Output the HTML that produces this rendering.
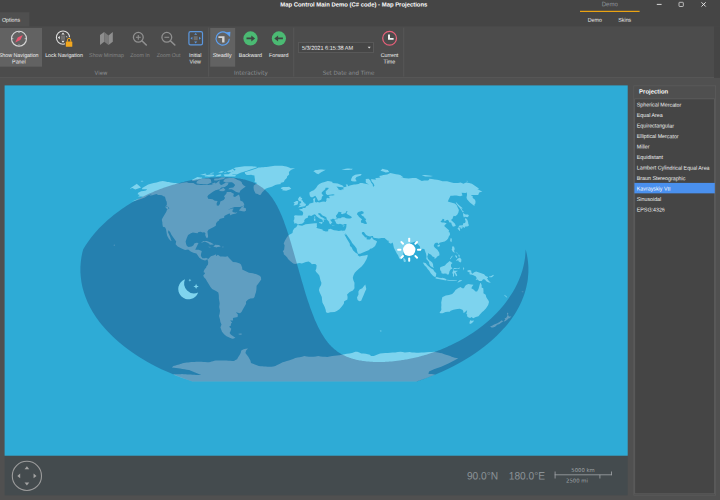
<!DOCTYPE html>
<html><head><meta charset="utf-8"><title>Map Control Main Demo (C# code) - Map Projections</title>
<style>
html,body{margin:0;padding:0}
body{width:720px;height:500px;background:#505050;position:relative;overflow:hidden;font-family:"Liberation Sans",sans-serif;font-size:5.3px;color:#efefef}
div{position:absolute;box-sizing:border-box}
.t{left:0;top:0;white-space:nowrap}
</style></head><body>
<svg width="720" height="500" viewBox="0 0 720 500" style="position:absolute;left:0;top:0"><rect x="0.00" y="0.00" width="720.00" height="26.60" fill="#454545"/><rect x="0.00" y="12.20" width="29.40" height="14.60" fill="#4f4f4f"/><rect x="0.00" y="26.60" width="714.00" height="50.60" fill="#4c4c4c"/><rect x="0.00" y="77.10" width="714.00" height="0.80" fill="#585858"/><rect x="714.00" y="26.60" width="6.00" height="51.30" fill="#454545"/><rect x="0.00" y="28.00" width="42.00" height="38.70" fill="#626262"/><rect x="210.20" y="28.00" width="25.00" height="38.70" fill="#626262"/><rect x="208.30" y="27.60" width="0.80" height="49.00" fill="#5a5a5a"/><rect x="293.40" y="27.60" width="0.80" height="49.00" fill="#5a5a5a"/><rect x="403.40" y="27.60" width="0.80" height="49.00" fill="#5a5a5a"/><rect x="298.10" y="42.10" width="75.70" height="10.80" fill="#5e5e5e"/><rect x="298.90" y="42.90" width="74.10" height="9.20" fill="#464646"/><rect x="580.00" y="10.80" width="59.60" height="1.20" fill="#eba312"/><rect x="4.60" y="455.60" width="623.10" height="39.70" fill="#444b4e"/><rect x="633.40" y="85.50" width="82.60" height="410.00" fill="#5c5c5c"/><rect x="634.10" y="86.20" width="81.20" height="408.60" fill="#4f4f4f"/><rect x="634.40" y="98.50" width="80.40" height="395.60" fill="#606060"/><rect x="635.10" y="99.20" width="79.00" height="394.20" fill="#454545"/><rect x="634.40" y="182.90" width="80.40" height="10.45" fill="#4a90ee"/><g><rect x="4.6" y="85.4" width="623.1" height="370.3" fill="#2eabd6"/>
<path d="M142.2 188.0L148.2 184.6L153.6 183.1L156.6 182.4L159.7 181.6L162.7 180.9L164.2 181.2L165.7 181.5L167.3 181.9L168.9 182.1L170.6 182.4L172.4 182.7L174.1 183.0L175.8 183.1L177.5 183.2L179.2 183.4L181.8 183.0L184.4 182.6L186.9 182.2L188.7 183.1L191.1 183.1L193.4 183.1L194.9 183.9L196.4 184.7L198.5 184.8L200.6 184.9L202.8 185.0L204.6 185.0L206.5 185.0L208.4 185.0L210.6 184.7L212.7 184.4L215.5 183.7L219.8 180.2L219.3 183.1L220.2 184.4L221.6 185.0L225.6 182.7L228.5 183.1L227.7 185.0L224.9 187.1L221.3 187.5L219.5 189.3L215.5 190.2L212.9 191.8L208.4 194.9L207.4 196.6L208.1 198.7L210.3 199.0L212.5 199.3L214.8 200.8L217.6 201.0L216.6 203.6L216.8 205.5L218.4 205.8L219.9 203.9L220.3 201.5L223.7 199.9L225.1 198.0L224.0 196.2L226.3 193.7L226.8 191.9L228.7 192.0L230.7 192.1L232.3 192.9L233.9 193.7L233.2 196.2L234.9 197.0L237.7 195.2L239.0 194.6L240.1 198.0L240.2 200.5L242.9 201.8L244.3 204.3L243.9 205.5L240.1 207.1L237.4 207.1L234.7 207.1L231.0 208.2L227.6 210.1L232.0 208.5L233.8 208.7L232.6 210.1L232.5 212.1L235.7 212.7L237.5 212.1L236.0 213.4L232.4 214.3L229.8 215.5L230.3 213.8L229.2 213.6L226.6 214.8L224.6 215.7L223.9 217.3L224.6 217.7L222.1 218.3L219.6 219.1L219.0 220.4L217.1 221.7L216.0 223.6L215.8 225.7L213.3 227.3L211.3 228.2L208.5 229.8L207.4 231.6L207.9 234.8L208.1 236.6L207.3 238.2L206.2 237.4L205.2 235.0L205.5 233.3L204.3 232.3L202.4 232.6L200.9 231.8L198.5 231.9L197.5 233.3L195.8 233.0L192.9 232.5L190.9 233.3L188.1 235.0L186.8 237.9L185.6 241.6L186.1 244.1L186.9 246.0L188.6 247.0L191.8 246.5L193.5 245.3L194.3 243.5L196.6 242.8L198.5 243.0L197.4 245.3L196.3 247.4L195.2 249.8L198.6 249.8L201.8 250.9L201.0 254.0L200.9 256.0L202.4 258.3L205.2 258.2L205.9 257.7L208.3 258.9L208.5 259.8L207.0 259.4L205.1 260.5L203.3 260.0L201.4 259.3L199.1 257.4L198.2 255.9L196.4 253.4L193.4 252.7L190.7 251.4L188.2 249.4L185.1 249.9L181.6 248.4L177.7 246.6L175.6 244.3L176.2 241.6L174.4 239.1L172.6 236.6L171.4 234.8L170.1 232.0L168.5 230.2L168.0 232.3L169.2 234.8L170.3 237.2L170.9 239.5L171.6 240.7L170.9 241.1L169.0 238.9L167.2 235.8L166.8 234.1L166.4 231.6L166.0 229.2L165.0 227.3L162.9 226.7L162.4 224.1L162.4 222.6L161.9 220.4L161.9 219.3L163.0 217.3L164.8 214.2L166.2 212.1L167.1 209.4L169.4 208.6L168.3 207.0L166.2 206.1L166.9 204.3L166.7 201.8L166.0 200.5L165.5 198.7L165.0 196.8L163.5 196.2L161.9 195.2L160.0 195.1L158.1 194.9L156.5 193.9L152.2 195.2L149.3 195.8L152.3 193.7L147.8 195.6L144.9 197.4L140.8 198.9L136.2 200.4L132.0 201.4L135.6 199.9L140.6 198.0L143.0 196.6L140.7 196.4L138.0 196.6L139.8 194.9L137.6 194.2L138.2 192.8L141.1 191.2L143.5 190.9L145.8 190.6L147.3 189.3L145.4 189.3L142.1 189.2ZM165.1 206.4L167.9 207.1L168.5 209.2L167.1 209.1L166.0 208.0ZM238.9 210.4L241.9 206.8L244.4 205.4L243.5 207.4L245.8 208.2L246.1 210.5L244.4 211.4L242.4 211.2ZM239.4 192.7L236.2 192.1L234.0 190.6L231.7 189.3L228.3 189.3L229.5 188.1L233.3 187.5L235.2 185.0L233.2 183.1L231.9 182.2L230.0 182.3L228.1 182.4L226.2 182.5L224.6 181.9L223.1 181.2L225.1 178.8L227.5 178.3L229.8 177.9L231.8 177.9L233.8 177.9L235.9 179.1L237.6 179.9L239.4 180.6L241.6 182.1L242.1 183.7L243.8 185.6L245.7 186.6L242.7 188.7L240.4 190.6ZM197.8 180.6L202.5 178.4L204.7 178.4L206.8 178.5L209.0 178.5L210.8 179.4L211.1 180.9L211.5 182.5L207.1 184.4L205.3 184.3L203.5 184.2L201.7 184.1L200.0 183.9L198.4 183.7L196.7 183.5L196.5 181.9ZM191.8 180.0L197.4 177.1L199.0 177.3L200.6 177.4L202.2 177.5L201.7 178.8L198.8 179.7L196.0 180.6L192.6 180.9ZM228.6 174.4L230.2 174.4L231.9 174.5L233.5 174.5L235.2 174.6L236.8 174.6L241.1 172.5L243.2 171.9L245.4 171.3L247.9 170.5L250.5 169.6L252.9 168.8L255.2 167.9L257.5 166.9L256.1 166.7L254.8 166.6L253.4 166.4L252.1 166.2L250.6 166.2L249.1 166.2L247.5 166.3L246.0 166.3L244.5 166.3L242.7 166.6L241.0 166.8L239.2 167.1L237.4 167.3L235.6 167.6L232.7 168.8L233.6 169.7L234.7 170.7L230.4 172.5ZM224.8 176.6L226.5 176.6L228.3 176.6L230.0 176.6L231.7 176.6L233.5 176.6L235.2 176.6L236.2 175.4L234.7 175.1L233.2 174.9L231.7 174.6L230.3 174.4L228.8 174.2L227.1 174.2L225.3 174.3L223.5 174.4L224.1 175.5ZM218.7 180.0L221.4 179.5L224.0 179.0L225.3 177.5L223.4 177.4L221.5 177.4L218.4 178.4L216.2 178.6L214.1 178.8L214.3 180.4L217.0 180.4ZM204.3 175.6L207.2 175.0L210.1 174.4L211.5 174.6L213.0 174.8L214.4 175.0L213.5 176.3L211.3 176.5L209.1 176.8L207.1 176.6L205.0 176.5ZM226.8 171.3L230.3 169.9L233.7 168.6L234.7 169.1L235.7 169.7L232.6 171.9L230.4 172.1L228.2 172.3ZM219.1 190.0L223.5 187.7L225.5 190.0L223.2 191.2L219.9 191.0ZM244.7 172.2L247.1 171.5L249.6 170.7L252.0 170.0L254.2 169.2L256.4 168.4L258.5 167.6L260.1 167.4L261.8 167.3L263.4 167.2L265.0 167.1L266.6 166.9L268.2 166.7L269.8 166.5L271.5 166.3L273.1 166.0L274.7 165.8L276.2 165.8L277.7 165.8L279.2 165.7L280.7 165.7L282.2 165.7L283.5 166.0L284.9 166.3L286.3 166.6L287.8 166.9L289.1 167.6L290.5 168.2L292.0 168.2L293.6 168.2L295.1 168.2L293.0 169.1L290.9 170.0L288.9 171.9L289.2 174.4L287.2 176.3L286.8 178.1L284.7 180.0L283.8 181.9L280.3 183.1L281.1 184.0L279.2 184.3L277.2 184.6L275.3 184.9L271.9 186.8L268.2 187.8L265.6 188.7L264.0 190.6L262.0 192.4L260.8 194.7L259.1 195.1L257.9 194.1L255.6 193.4L254.7 191.8L253.9 190.0L253.5 187.5L253.8 185.6L257.2 183.1L254.5 182.1L255.0 180.0L254.6 177.5L254.4 175.6L252.7 175.2L251.1 174.8L248.9 174.9L246.7 175.0L245.1 173.8ZM280.7 188.1L282.9 187.0L285.0 187.0L287.2 187.1L289.1 186.8L291.3 188.7L289.7 189.6L286.2 190.7L284.1 190.5L282.1 190.2L282.9 189.3L281.1 188.8ZM208.3 258.9L210.9 256.3L214.1 255.3L216.1 254.2L215.9 256.2L217.9 254.7L220.2 256.4L222.7 256.5L225.2 256.7L227.7 256.3L228.8 257.8L230.0 259.0L233.0 261.9L236.1 262.3L239.8 263.4L241.0 264.6L242.2 267.7L242.2 269.6L244.3 270.6L249.0 272.7L252.8 273.2L256.5 274.3L259.7 275.8L260.9 277.1L261.2 279.6L258.6 283.3L256.6 285.8L256.4 289.5L256.0 292.0L255.0 295.1L254.5 297.0L253.4 298.2L250.4 298.5L248.1 299.5L245.9 301.7L246.1 303.8L244.7 306.3L242.8 309.4L241.5 311.9L240.0 313.2L236.9 312.5L235.8 312.2L237.9 314.4L237.6 316.9L235.2 317.5L232.9 318.1L233.1 320.4L230.1 320.6L232.1 322.5L230.9 323.7L230.9 325.6L229.1 326.8L231.3 328.7L230.5 331.2L229.6 333.1L231.0 334.8L235.4 337.7L233.8 338.4L232.3 338.7L229.2 337.4L226.5 336.2L224.1 334.3L222.0 331.8L221.1 329.3L220.4 327.5L221.5 324.4L220.4 321.9L220.0 319.4L219.0 315.9L219.6 313.8L220.0 310.7L219.2 306.9L219.7 303.2L218.9 298.8L218.8 295.1L218.3 292.5L216.0 291.0L212.1 288.9L210.3 286.8L209.0 284.5L207.1 281.4L205.7 278.9L203.8 277.1L203.3 275.2L204.9 273.7L204.9 272.7L203.6 272.3L203.9 270.8L204.8 269.0L206.1 267.7L206.4 266.5L208.0 264.6L208.2 262.1L207.7 260.6ZM297.5 225.0L302.1 225.8L305.6 224.2L307.9 224.0L310.2 223.8L312.5 223.6L314.9 223.3L316.2 223.2L317.2 223.6L316.7 224.8L317.1 226.7L316.2 227.3L317.4 228.3L319.7 228.7L322.5 229.4L322.8 230.4L325.8 231.6L328.2 231.3L328.1 229.4L330.4 228.7L334.0 230.2L336.4 230.6L338.9 231.1L341.2 230.4L342.7 230.8L343.1 232.3L345.0 235.4L347.4 239.7L349.7 243.5L350.0 246.0L351.6 247.2L353.0 250.3L355.6 252.8L357.9 254.0L357.8 255.3L359.5 256.5L362.5 255.7L365.0 255.5L367.7 254.8L367.5 256.7L366.4 259.6L364.1 263.4L361.6 266.5L359.2 268.4L356.7 270.8L354.8 272.7L353.5 275.2L352.8 277.7L353.4 280.2L354.5 282.7L354.4 285.8L354.5 288.3L352.9 290.5L349.7 292.0L347.1 294.5L347.6 297.0L347.4 299.5L344.2 301.3L343.8 303.8L342.0 306.3L339.4 309.2L336.8 311.0L334.6 311.9L330.3 312.2L327.9 312.9L326.0 312.2L325.7 310.0L324.7 306.9L323.6 304.8L322.4 302.6L322.0 299.5L321.8 297.0L319.7 292.6L318.9 290.1L319.6 287.6L321.1 284.9L321.4 282.7L320.5 280.6L319.7 277.1L319.3 275.6L318.1 274.0L316.2 272.1L315.4 270.6L316.2 269.0L316.5 266.7L316.6 265.2L315.3 264.0L313.1 264.1L311.9 264.2L310.6 262.8L308.6 261.6L305.9 262.0L303.2 263.1L301.9 263.6L299.4 263.1L295.1 264.1L293.2 263.4L290.1 261.1L288.0 259.0L287.4 257.8L285.8 255.9L283.8 254.3L283.7 252.8L282.8 251.3L284.1 249.7L284.4 247.2L284.6 245.3L283.7 243.5L285.0 240.4L286.9 237.2L288.8 235.1L291.2 233.8L292.5 232.9L292.9 230.4L294.4 228.2L296.2 227.3ZM365.3 284.5L366.3 288.9L365.1 291.4L364.0 294.2L362.8 297.0L361.2 300.7L359.3 301.3L357.6 300.1L357.0 297.6L358.5 294.5L358.4 291.4L359.7 289.5L362.3 288.3L363.6 286.4ZM297.9 224.8L297.1 223.8L295.8 223.3L294.1 223.6L294.2 221.7L293.4 221.3L294.3 219.2L294.4 217.3L293.9 216.1L295.4 215.2L298.2 215.5L301.0 215.6L302.4 215.6L303.1 214.0L303.1 212.4L302.0 210.9L299.4 210.0L299.2 209.4L301.1 208.9L302.6 209.0L302.4 207.8L304.4 208.1L306.0 207.3L306.1 206.3L308.2 205.6L309.2 204.3L309.7 203.4L311.9 203.0L313.5 202.6L313.4 200.5L312.9 198.9L315.3 197.8L315.2 199.3L314.9 200.8L315.0 201.8L316.1 202.4L317.7 201.9L319.3 202.4L321.9 201.8L324.0 201.5L325.6 201.9L326.5 200.5L326.3 198.7L327.7 197.8L329.3 198.4L329.6 197.0L328.4 195.9L330.9 195.6L332.9 195.4L334.9 194.9L333.2 194.3L329.8 194.7L327.3 194.9L325.9 193.7L325.7 191.2L328.2 189.0L328.8 188.1L328.0 187.7L325.6 187.8L325.2 189.3L323.2 191.0L321.7 192.4L321.8 194.1L323.5 195.2L321.9 196.7L321.6 198.7L321.1 199.7L319.4 200.5L318.1 200.7L317.5 199.5L316.6 197.8L315.7 196.2L315.1 195.8L312.7 197.3L311.1 197.2L310.0 196.2L309.5 194.3L309.4 192.4L311.3 191.2L313.7 190.3L315.1 189.0L316.4 187.5L317.6 185.6L319.3 184.1L321.9 182.7L324.6 182.1L327.7 181.1L329.8 181.2L332.8 182.1L332.1 182.9L335.0 183.2L337.8 183.5L340.0 184.4L342.1 185.2L343.7 186.5L342.8 187.2L339.9 187.1L336.4 186.6L338.4 188.7L338.4 189.6L341.2 190.2L341.6 189.6L343.9 189.2L342.9 187.7L344.6 187.0L346.5 186.8L346.1 184.6L344.9 184.2L347.5 184.6L348.2 186.2L349.8 185.5L351.9 185.0L354.1 184.6L355.5 184.6L358.5 184.0L360.2 182.9L362.2 183.1L364.2 183.4L366.9 184.0L369.0 184.4L366.3 183.0L365.7 181.9L365.8 180.6L365.7 179.0L368.6 178.8L370.3 180.6L371.1 182.5L372.7 184.4L372.9 186.2L373.7 186.8L374.4 185.6L373.7 183.7L371.5 181.2L371.1 179.1L374.1 179.6L376.2 179.4L375.2 178.1L377.0 177.9L378.7 177.7L380.4 177.5L379.1 176.0L380.5 175.7L381.9 175.4L383.3 175.0L385.3 174.8L387.2 174.6L388.3 174.1L389.3 173.5L390.3 172.9L393.8 173.8L396.0 174.2L398.1 174.6L400.3 175.0L403.6 177.5L400.5 177.5L403.5 177.9L406.1 178.2L408.6 178.5L410.6 178.3L412.6 178.1L414.4 178.1L416.1 178.1L421.8 181.0L424.2 180.4L426.2 180.5L428.1 180.6L429.2 179.4L429.3 178.8L431.9 179.1L434.6 179.4L437.0 179.8L439.4 180.2L442.5 181.2L444.8 181.2L447.1 181.2L451.6 182.5L453.9 182.9L456.0 183.0L458.0 183.1L459.3 182.7L460.6 182.4L463.5 183.7L464.9 183.1L466.3 182.5L469.1 183.1L471.9 183.7L475.6 186.2L479.2 188.7L477.3 189.1L482.4 191.8L480.8 192.1L479.2 192.4L478.7 193.7L478.2 194.9L475.6 194.9L473.1 194.9L470.8 195.2L473.1 196.8L472.5 197.7L475.0 199.7L475.5 201.2L475.4 203.4L474.6 204.3L474.4 206.1L469.9 202.4L467.0 199.3L466.5 197.4L467.0 194.9L466.8 192.1L468.0 191.8L466.7 192.4L465.4 193.1L461.6 192.8L462.5 195.6L460.1 196.2L456.4 195.6L454.5 195.6L452.5 195.7L450.5 195.8L449.8 197.2L449.0 198.7L447.8 201.5L451.1 202.4L454.8 203.6L456.6 204.9L457.7 207.4L458.9 209.9L458.4 212.4L457.2 214.8L455.2 216.3L453.8 215.8L453.0 217.0L452.7 218.6L451.0 220.1L454.8 223.6L455.7 225.4L455.6 226.0L452.9 226.8L451.6 224.2L451.3 222.7L449.2 222.3L448.6 220.4L447.2 219.8L445.1 221.1L444.3 221.3L444.2 219.2L442.8 218.7L441.5 220.8L440.4 221.3L441.8 222.6L444.1 222.6L446.7 223.3L445.1 224.8L444.2 226.0L446.4 227.9L448.7 230.0L449.2 231.1L448.4 231.9L449.8 232.5L450.0 234.8L448.8 236.6L448.1 238.5L446.8 240.1L444.7 241.4L442.4 242.0L439.5 242.8L438.7 244.3L437.7 242.8L435.9 242.7L434.5 243.8L433.7 246.0L435.0 247.8L437.4 249.7L439.3 252.8L439.5 255.3L436.9 256.7L436.4 257.8L434.6 258.9L434.5 257.2L432.5 256.4L431.1 254.7L429.1 253.8L428.4 252.8L428.0 254.7L427.3 256.5L427.8 258.4L429.1 260.3L430.4 261.1L432.4 262.8L433.1 264.6L433.2 266.5L434.1 267.9L431.9 267.1L430.4 265.9L429.3 264.0L429.0 262.1L427.3 259.9L426.3 259.0L426.5 256.5L426.1 254.0L425.2 251.6L424.3 249.1L422.3 248.8L421.2 249.9L420.3 249.1L419.9 246.6L418.6 245.0L416.9 243.5L416.0 241.8L414.4 241.8L412.7 242.5L410.3 242.8L410.0 244.5L408.3 245.3L405.7 248.8L403.2 250.3L403.4 253.2L403.1 255.9L402.9 256.9L402.3 258.0L401.4 258.6L400.6 259.5L399.2 258.2L398.1 255.3L396.8 253.4L395.5 250.9L393.9 247.8L393.5 246.0L393.0 243.5L392.4 242.5L391.0 243.7L389.0 242.8L388.2 241.7L389.4 241.0L387.4 240.4L385.4 238.7L384.6 238.0L381.6 238.1L378.7 238.4L375.6 238.0L373.5 237.7L372.9 236.0L372.0 235.9L370.0 236.5L368.1 236.0L366.1 234.9L365.0 233.5L363.9 232.0L362.5 231.9L361.7 232.9L362.5 234.4L364.3 236.2L364.9 237.2L365.9 237.5L366.4 237.1L366.7 238.5L366.5 239.2L367.9 239.5L370.1 239.4L371.1 238.1L372.0 237.0L372.7 238.7L374.1 240.0L375.6 240.4L377.1 241.6L376.0 244.0L375.1 246.0L373.6 247.2L371.9 248.4L370.7 248.4L368.6 250.2L366.0 251.2L363.6 252.2L360.2 253.7L358.1 253.8L357.4 252.2L356.9 250.3L356.6 248.4L354.8 246.0L352.1 243.1L351.1 241.0L349.3 238.5L347.7 236.2L346.3 234.5L345.8 233.0L345.5 235.0L344.1 234.1L343.3 232.4L342.7 230.8L345.0 230.6L345.7 228.8L346.3 227.3L346.4 225.4L346.5 223.9L344.6 223.9L342.9 224.7L340.0 223.8L338.2 224.2L336.3 223.6L335.6 221.7L334.7 220.4L334.5 219.8L335.9 219.3L337.6 219.2L337.6 218.3L336.4 218.5L334.8 219.2L334.2 219.0L333.0 218.7L331.5 219.0L332.0 219.8L330.5 219.3L330.7 220.7L332.2 222.3L332.2 222.7L331.1 222.9L331.4 224.2L330.5 224.3L329.7 223.8L329.0 222.6L329.3 221.9L328.3 221.1L327.4 220.1L326.6 219.2L326.6 217.7L325.4 216.7L322.5 215.5L321.3 214.2L320.4 213.2L319.8 213.5L319.6 212.9L318.2 213.2L318.4 214.5L319.6 215.3L320.9 217.0L322.6 217.5L323.6 218.3L325.6 219.6L325.6 220.1L323.9 219.2L323.5 220.2L324.2 221.1L323.5 221.7L322.6 222.3L322.9 221.3L322.4 219.8L321.0 219.0L319.2 218.2L318.3 217.6L316.3 216.1L315.9 215.0L314.4 214.3L312.9 215.1L311.2 216.0L309.5 215.6L308.0 215.8L307.9 216.8L308.0 217.5L306.9 218.1L305.3 218.8L304.1 220.4L304.6 221.3L303.6 222.6L302.1 223.8L299.3 223.9ZM136.9 183.7L137.8 184.7L138.8 185.6L139.9 186.5L141.0 187.5L135.3 189.6L133.8 188.8L132.4 188.1L129.6 188.7L133.2 186.2ZM298.2 207.4L300.6 207.0L303.3 206.5L305.9 205.9L305.3 205.5L306.2 204.1L304.6 203.6L304.4 202.8L303.1 201.7L302.7 200.5L301.3 199.9L301.7 199.5L302.3 198.0L300.8 197.8L300.3 197.9L301.3 196.7L299.3 196.7L298.7 198.0L297.9 199.0L298.6 200.5L299.3 201.3L300.7 201.3L301.2 202.6L301.1 203.3L299.6 203.3L299.9 203.9L299.3 204.9L298.8 205.1L300.6 205.5L301.2 205.8L299.5 206.1ZM293.6 205.4L295.2 205.3L297.6 204.6L298.0 203.3L298.4 201.8L297.8 200.9L295.8 200.9L295.4 201.8L293.8 202.2L293.7 203.1L294.8 203.5L293.9 204.5ZM458.3 227.3L459.4 225.4L462.8 225.3L463.3 223.2L465.1 222.9L465.7 221.1L464.8 219.2L465.7 218.1L467.3 219.8L468.1 221.9L468.3 223.8L469.0 225.2L468.2 226.0L467.2 226.4L465.2 226.5L465.1 226.9L464.4 227.9L462.9 226.7L460.6 226.9L459.7 227.4ZM458.4 227.4L459.8 228.3L460.2 230.4L459.6 231.0L458.6 229.8L457.5 228.5ZM460.2 227.3L462.5 227.0L462.6 227.9L461.5 228.8L460.4 228.2ZM464.1 218.0L463.2 215.8L463.0 213.1L465.4 214.5L468.0 214.6L469.0 215.7L467.5 217.3L465.1 216.7L464.2 217.1ZM462.9 212.4L463.8 211.4L462.3 210.5L461.3 208.2L463.0 208.6L458.8 204.9L455.9 202.0L455.9 203.0L457.7 205.5L459.9 208.0L461.6 210.5ZM450.5 238.2L451.8 238.5L451.7 241.0L451.3 242.2L450.2 241.0L450.4 239.1ZM437.3 245.6L439.3 244.6L440.1 245.2L439.1 246.7L437.5 246.6ZM403.3 257.5L405.1 259.0L406.0 260.9L405.3 261.9L404.0 262.1L403.4 260.3ZM452.0 246.6L454.0 246.6L454.7 249.1L454.0 250.9L454.8 252.2L457.4 252.8L457.6 253.9L455.9 252.6L454.3 252.6L453.1 251.9L452.4 250.9L451.6 249.3L452.2 248.4ZM455.9 260.9L457.5 258.8L459.9 257.4L461.4 259.6L461.2 261.8L460.4 262.6L458.7 261.5L458.3 260.3ZM458.8 254.0L459.9 255.9L459.2 256.9L458.3 255.9ZM455.2 254.9L456.9 255.9L457.2 258.0L456.2 257.8L455.4 256.5ZM449.8 259.0L452.2 255.5L452.6 256.3L450.4 259.3ZM440.0 267.7L440.8 267.1L442.9 266.2L445.0 265.6L446.1 263.9L448.5 261.9L449.7 260.9L450.6 261.8L452.5 263.0L451.1 264.2L450.9 265.9L451.2 267.1L452.5 268.4L450.6 269.6L449.4 271.5L449.1 273.3L448.6 274.6L446.8 274.6L446.8 273.7L445.0 273.6L443.3 273.7L441.5 273.2L441.3 271.5L440.3 270.2L440.0 269.0ZM422.8 262.6L425.6 263.1L427.1 264.9L429.4 266.9L431.3 268.4L433.2 269.6L434.4 271.5L436.3 273.3L435.9 276.8L434.2 276.8L432.5 275.2L430.7 273.3L429.2 270.8L427.6 269.0L426.3 267.1L424.4 265.2ZM435.0 278.1L436.7 277.1L439.2 277.7L441.6 278.1L442.3 277.7L444.3 278.3L446.5 279.3L446.4 280.4L443.3 280.1L439.7 279.3L436.6 278.7ZM447.1 279.8L449.5 279.9L452.0 280.1L454.5 280.1L457.0 279.9L456.7 280.6L453.2 280.7L449.5 280.8L447.2 280.6ZM457.3 282.4L459.4 280.3L462.3 280.1L461.2 281.0L458.6 282.3ZM453.7 268.0L455.0 268.1L457.5 268.5L459.9 267.5L459.7 268.5L458.1 269.1L455.6 269.0L454.1 269.0L453.7 270.6L455.0 270.8L456.0 270.7L457.8 270.7L456.8 271.7L455.6 272.1L456.5 273.7L457.3 275.2L456.6 276.2L455.6 275.6L454.9 273.3L454.2 273.3L454.0 276.4L452.9 276.4L453.0 274.0L452.2 273.0L452.9 271.2L453.5 269.6ZM463.0 267.1L464.3 268.4L463.7 269.6L463.3 270.6L463.1 268.4ZM467.4 270.6L469.3 270.1L471.2 270.6L471.4 272.5L472.3 273.7L474.2 272.3L476.1 271.6L479.8 272.8L484.1 274.3L485.6 276.1L488.0 277.1L487.9 277.9L486.9 278.1L488.3 280.2L490.2 282.3L491.1 282.7L488.9 282.4L486.6 281.4L484.9 279.6L483.1 279.3L482.1 280.4L481.7 281.0L479.2 280.9L477.5 279.6L475.6 279.9L476.7 278.3L475.9 276.4L473.5 275.3L471.0 274.5L469.8 274.6L469.6 273.3L468.6 273.1L470.5 272.6L469.0 272.3L467.4 271.5ZM488.9 276.6L490.8 276.3L493.4 274.8L493.7 275.8L491.7 277.3L489.5 277.3ZM442.4 297.0L443.2 296.7L445.8 295.5L449.0 294.9L452.2 294.1L454.2 292.0L455.5 290.1L458.4 288.0L460.8 287.0L462.0 288.3L463.9 288.3L464.8 286.4L466.0 285.0L468.3 283.9L471.3 284.5L473.5 284.8L472.2 286.4L471.3 288.3L473.5 289.5L475.5 291.4L477.1 291.4L478.5 288.9L479.4 285.8L480.1 283.3L480.8 282.9L481.7 285.2L481.6 287.4L483.3 288.3L483.5 291.4L483.4 293.2L485.7 294.7L486.2 297.0L487.2 298.8L488.6 300.7L489.0 302.0L488.2 305.1L486.1 308.2L483.8 310.7L482.2 311.9L479.9 314.4L478.5 316.3L475.8 316.9L473.2 318.3L472.1 317.4L471.6 317.1L470.1 317.9L467.6 317.1L467.0 315.6L467.3 314.4L466.3 313.9L466.7 312.5L467.0 310.7L467.3 310.0L463.9 312.9L463.6 313.0L463.1 310.7L462.4 309.7L459.8 308.8L457.3 309.0L453.4 309.8L450.7 310.7L449.7 311.8L447.9 311.8L445.5 311.9L442.7 313.2L440.3 313.2L439.5 312.3L440.8 311.0L441.4 309.4L441.2 307.6L441.4 305.1L441.2 302.6L441.7 300.1ZM470.1 320.2L471.8 320.7L474.1 320.5L473.1 322.1L471.3 323.4L469.9 323.9L469.4 322.9L469.8 321.6ZM507.2 312.4L508.4 313.5L507.8 315.4L508.8 315.6L508.8 316.4L510.9 316.4L511.4 316.5L509.5 318.3L508.2 318.6L507.5 319.6L505.5 320.9L504.2 321.4L503.9 321.0L505.3 319.6L504.7 318.8L504.6 318.5L506.2 317.8L507.0 316.6L507.5 315.0L507.0 313.4ZM502.3 320.0L502.1 321.0L503.5 320.9L502.9 321.6L500.7 323.1L499.6 323.9L499.6 324.1L497.2 324.7L495.1 326.7L492.9 327.6L491.6 327.6L490.2 326.8L490.3 326.6L492.5 325.4L494.1 324.4L496.8 323.4L499.1 322.2L500.2 321.4L501.5 320.4ZM201.0 242.5L203.7 241.0L206.7 240.9L210.7 242.6L212.9 243.8L213.8 244.5L209.7 244.8L209.3 243.8L207.0 242.6L204.8 241.6L202.2 242.5ZM213.3 246.7L215.2 244.8L218.9 245.0L220.7 246.3L219.9 246.8L217.4 247.0L216.5 247.6L215.0 247.0ZM208.5 246.8L210.9 247.1L210.0 247.4L208.4 247.1ZM222.1 246.7L223.9 246.8L223.5 247.2L222.0 247.2ZM318.9 222.3L322.5 222.1L322.0 223.9L318.9 222.8ZM313.8 218.6L315.4 218.6L315.5 220.8L314.2 221.1ZM314.2 216.7L315.2 216.1L315.1 218.0L314.4 217.8ZM331.9 225.4L335.2 225.8L332.5 226.0ZM342.2 226.0L344.7 225.3L343.9 226.4ZM313.3 171.3L315.5 170.0L317.1 169.9L318.6 169.7L320.2 169.5L322.0 169.6L323.9 169.7L325.8 169.8L324.4 170.5L323.0 171.3L321.5 171.9L319.7 173.2L318.3 174.2L316.0 173.2L315.1 172.3ZM350.9 180.6L351.3 178.8L352.6 176.3L353.9 175.5L355.2 174.8L356.8 174.6L358.5 174.3L360.1 174.1L361.7 173.9L360.8 175.6L359.4 176.1L357.9 176.5L356.5 176.9L355.3 178.8L356.7 181.2L354.6 181.6L352.1 181.2ZM380.5 170.7L381.5 169.7L382.4 168.8L385.1 169.4L387.8 170.0L389.2 171.9L387.5 172.2L385.8 172.5L383.2 171.6ZM421.6 175.6L423.2 175.3L424.9 175.0L426.9 175.2L429.0 175.5L431.0 175.7L433.0 175.9L431.8 176.2L430.5 176.5L428.9 176.6L427.2 176.6L425.5 176.6ZM466.2 181.0L467.2 180.7L468.2 181.4L467.3 181.5ZM141.6 180.7L143.7 180.9L142.6 181.4L140.6 181.4ZM238.5 333.7L241.6 333.4L241.5 334.7L238.8 334.6ZM114.0 244.5L115.0 245.0L114.0 246.0L113.7 245.3ZM504.6 294.7L507.4 297.2L506.7 297.5L504.4 295.4ZM521.9 291.4L523.5 291.4L523.1 292.2L521.7 292.1ZM379.9 330.6L381.7 330.7L381.2 331.4L379.9 331.3ZM341.4 169.4L342.8 169.2L344.3 169.0L345.7 168.8L347.1 168.6L349.0 168.6L350.9 168.7L352.7 168.8L351.8 169.7L350.3 169.8L348.8 169.9L347.2 170.0L345.7 170.0L343.5 169.7ZM200.0 175.0L202.7 174.2L205.4 173.4L206.7 174.4L203.1 175.3L201.5 175.1ZM215.1 176.0L217.7 175.1L220.3 174.3L221.6 175.0L220.0 176.3L218.2 176.3L216.4 176.4ZM218.1 172.5L221.6 170.9L222.8 171.2L224.1 171.5L221.9 172.8L220.0 172.7ZM209.9 173.2L213.3 172.4L214.2 173.0L210.9 173.7ZM211.8 183.7L215.1 182.6L215.7 183.5L214.1 184.4L212.3 184.2ZM223.8 172.5L226.1 171.5L226.7 172.2L224.8 172.8ZM173.1 374.4L174.6 374.3L176.1 374.3L177.6 374.3L179.1 374.2L180.5 374.2L182.0 374.1L183.8 374.2L185.6 374.3L187.3 374.4L189.1 374.5L190.8 374.6L192.5 374.7L194.3 374.8L196.0 374.9L197.8 374.9L199.5 375.0L201.3 375.0L195.1 372.5L189.1 370.0L186.9 369.7L184.7 369.3L182.4 368.9L180.2 368.5L178.1 368.3L176.1 368.0L174.0 367.8L171.9 367.5L172.6 366.8L173.4 366.0L174.5 365.7L175.7 365.4L176.9 365.1L178.1 364.8L179.2 364.4L180.3 364.1L181.4 363.7L182.6 363.3L183.8 362.9L185.3 362.8L186.8 362.6L188.3 362.4L189.8 362.2L191.3 362.1L192.9 362.0L194.6 361.9L196.2 361.8L197.9 361.8L199.6 361.7L201.4 361.8L203.3 361.9L205.2 362.1L207.1 362.2L209.0 362.3L210.3 361.9L211.7 361.6L213.0 361.2L214.4 360.8L215.8 360.4L217.6 360.4L219.4 360.4L221.1 360.4L222.9 360.4L224.7 360.4L226.6 360.6L228.4 360.7L230.3 360.8L232.2 360.9L234.0 361.1L235.5 360.1L237.1 359.2L238.1 357.3L239.3 355.5L240.7 353.0L241.3 350.5L243.6 349.2L245.9 348.8L248.1 348.4L246.1 350.5L245.4 353.0L248.3 356.7L250.4 360.4L251.0 362.9L253.6 364.0L256.2 365.0L258.8 366.0L260.5 366.2L262.3 366.3L264.0 366.4L265.7 366.5L267.4 366.7L269.5 366.7L271.5 366.7L273.4 366.4L275.4 366.0L277.1 365.1L278.9 364.2L280.8 363.2L282.7 362.3L284.7 361.7L286.8 361.1L288.9 360.4L291.0 359.8L293.1 358.9L295.3 358.0L297.6 357.6L299.8 357.3L302.1 356.7L304.4 356.1L306.7 356.4L309.0 356.7L311.3 356.7L313.6 356.7L315.9 356.4L318.3 356.1L320.5 356.4L322.8 356.7L325.1 356.8L327.3 357.0L329.7 356.5L332.2 356.1L334.6 355.8L337.0 355.5L339.4 355.2L341.8 354.8L344.4 354.3L346.9 353.8L349.4 353.4L352.0 353.0L355.3 351.7L357.3 351.7L359.3 352.5L361.3 353.4L363.5 353.6L365.8 353.8L367.9 354.3L369.9 354.8L371.0 356.1L373.8 356.1L376.9 354.8L380.1 353.6L382.7 353.3L385.3 353.0L387.7 352.9L390.2 352.7L392.7 352.5L395.2 352.4L397.9 352.0L400.5 351.7L402.7 352.0L404.8 352.4L407.3 352.2L409.8 352.1L412.0 352.4L414.1 352.6L416.5 352.7L418.8 352.7L421.4 352.5L423.9 352.4L426.5 352.2L429.1 352.0L431.6 351.9L434.2 351.7L436.1 352.2L438.0 352.6L440.0 352.9L442.0 353.2L443.6 353.9L445.1 354.6L446.9 355.0L448.6 355.5L450.1 356.1L451.6 356.7L453.2 357.2L454.7 357.7L456.5 358.0L458.3 358.3L453.7 360.8L448.9 363.3L441.2 366.7L433.9 369.2L429.0 371.6L428.7 372.7L428.3 373.8L429.5 373.9L430.7 374.0L431.9 374.1L433.1 374.3L434.2 374.4L435.4 374.5L426.4 378.1L416.4 381.6L415.2 381.6L413.9 381.6L412.7 381.6L411.4 381.6L410.2 381.6L408.9 381.6L407.7 381.6L406.4 381.6L405.2 381.6L404.0 381.6L402.7 381.6L401.5 381.6L400.2 381.6L399.0 381.6L397.7 381.6L396.5 381.6L395.2 381.6L394.0 381.6L392.8 381.6L391.5 381.6L390.3 381.6L389.0 381.6L387.8 381.6L386.5 381.6L385.3 381.6L384.0 381.6L382.8 381.6L381.6 381.6L380.3 381.6L379.1 381.6L377.8 381.6L376.6 381.6L375.3 381.6L374.1 381.6L372.8 381.6L371.6 381.6L370.4 381.6L369.1 381.6L367.9 381.6L366.6 381.6L365.4 381.6L364.1 381.6L362.9 381.6L361.6 381.6L360.4 381.6L359.2 381.6L357.9 381.6L356.7 381.6L355.4 381.6L354.2 381.6L352.9 381.6L351.7 381.6L350.4 381.6L349.2 381.6L348.0 381.6L346.7 381.6L345.5 381.6L344.2 381.6L343.0 381.6L341.7 381.6L340.5 381.6L339.2 381.6L338.0 381.6L336.8 381.6L335.5 381.6L334.3 381.6L333.0 381.6L331.8 381.6L330.5 381.6L329.3 381.6L328.0 381.6L326.8 381.6L325.6 381.6L324.3 381.6L323.1 381.6L321.8 381.6L320.6 381.6L319.3 381.6L318.1 381.6L316.8 381.6L315.6 381.6L314.4 381.6L313.1 381.6L311.9 381.6L310.6 381.6L309.4 381.6L308.1 381.6L306.9 381.6L305.6 381.6L304.4 381.6L303.2 381.6L301.9 381.6L300.7 381.6L299.4 381.6L298.2 381.6L296.9 381.6L295.7 381.6L294.4 381.6L293.2 381.6L292.0 381.6L290.7 381.6L289.5 381.6L288.2 381.6L287.0 381.6L285.7 381.6L284.5 381.6L283.2 381.6L282.0 381.6L280.8 381.6L279.5 381.6L278.3 381.6L277.0 381.6L275.8 381.6L274.5 381.6L273.3 381.6L272.0 381.6L270.8 381.6L269.6 381.6L268.3 381.6L267.1 381.6L265.8 381.6L264.6 381.6L263.3 381.6L262.1 381.6L260.8 381.6L259.6 381.6L258.4 381.6L257.1 381.6L255.9 381.6L254.6 381.6L253.4 381.6L252.1 381.6L250.9 381.6L249.6 381.6L248.4 381.6L247.2 381.6L245.9 381.6L244.7 381.6L243.4 381.6L242.2 381.6L240.9 381.6L239.7 381.6L238.4 381.6L237.2 381.6L236.0 381.6L234.7 381.6L233.5 381.6L232.2 381.6L231.0 381.6L229.7 381.6L228.5 381.6L227.2 381.6L226.0 381.6L224.8 381.6L223.5 381.6L222.3 381.6L221.0 381.6L219.8 381.6L218.5 381.6L217.3 381.6L216.0 381.6L214.8 381.6L213.6 381.6L212.3 381.6L211.1 381.6L209.8 381.6L208.6 381.6L207.3 381.6L206.1 381.6L204.8 381.6L203.6 381.6L202.4 381.6L201.1 381.6L199.9 381.6L198.6 381.6L197.4 381.6L196.1 381.6L194.9 381.6L193.6 381.6L192.4 381.6L182.2 378.0Z" fill="#7dd3ee"/>
<path d="M337.5 218.3L336.3 217.3L335.9 215.8L336.8 214.8L337.7 213.4L338.6 211.7L340.1 212.0L341.8 212.4L340.8 213.2L342.1 214.2L344.0 213.6L345.3 213.2L346.6 211.1L347.6 210.9L346.4 213.2L347.7 214.5L349.6 215.6L351.5 216.7L351.8 217.8L350.1 218.6L349.0 218.6L347.9 218.6L346.1 218.2L344.2 217.3L343.1 217.3L342.0 217.3L340.4 218.2L339.0 218.3ZM357.5 212.7L358.9 211.7L360.2 211.4L361.6 211.1L363.4 211.7L363.8 213.2L362.1 214.1L361.0 214.5L362.1 215.8L364.0 216.7L364.7 218.3L366.2 219.0L365.4 220.4L366.1 221.7L366.8 222.9L367.0 223.7L365.0 224.1L362.8 223.1L361.2 222.8L360.9 221.7L361.1 220.4L362.1 219.3L360.6 218.2L358.9 216.7L358.1 215.5L356.9 214.2Z" fill="#2eabd6"/>
<path d="M83.1 249.5L85.5 245.5L88.1 241.7L90.8 238.0L93.6 234.6L96.4 231.3L99.3 228.1L102.2 225.2L105.1 222.4L108.0 219.8L110.8 217.4L113.7 215.1L116.4 213.0L119.2 211.0L121.8 209.1L124.5 207.3L127.0 205.6L129.5 204.1L131.9 202.6L134.3 201.2L136.6 200.0L138.9 198.7L141.1 197.6L143.2 196.5L145.3 195.5L147.3 194.5L149.3 193.6L151.3 192.7L153.2 191.9L155.0 191.1L156.8 190.4L158.6 189.7L160.3 189.1L162.0 188.4L163.6 187.8L165.3 187.3L166.8 186.7L168.4 186.2L169.9 185.7L171.4 185.2L172.9 184.8L174.3 184.4L175.7 184.0L177.1 183.6L178.4 183.2L179.8 182.9L181.1 182.5L182.4 182.2L183.7 181.9L184.9 181.6L186.2 181.3L187.4 181.1L188.6 180.8L189.8 180.6L190.9 180.3L192.1 180.1L193.2 179.9L194.4 179.7L195.5 179.5L196.6 179.3L197.6 179.2L198.7 179.0L199.8 178.8L200.8 178.7L201.9 178.6L202.9 178.4L203.9 178.3L204.9 178.2L205.9 178.1L206.9 178.0L207.9 177.9L208.9 177.8L209.8 177.7L210.8 177.6L211.7 177.6L212.7 177.5L213.6 177.5L214.5 177.4L215.4 177.4L216.3 177.3L217.2 177.3L218.1 177.3L219.0 177.2L219.9 177.2L220.8 177.2L221.7 177.2L222.6 177.2L223.4 177.2L224.3 177.2L225.1 177.2L226.0 177.3L226.8 177.3L227.7 177.3L228.5 177.4L229.3 177.4L230.2 177.5L231.0 177.5L231.8 177.6L232.6 177.7L233.4 177.7L234.3 177.8L235.1 177.9L235.9 178.0L236.7 178.1L237.5 178.2L238.3 178.4L239.1 178.5L239.8 178.6L240.6 178.8L241.4 178.9L242.2 179.1L243.0 179.2L243.8 179.4L244.5 179.6L245.3 179.8L246.1 180.0L246.8 180.2L247.6 180.4L248.4 180.7L249.2 180.9L249.9 181.2L250.7 181.4L251.4 181.7L252.2 182.0L253.0 182.3L253.7 182.7L254.5 183.0L255.3 183.4L256.0 183.7L256.8 184.1L257.5 184.5L258.3 185.0L259.1 185.4L259.8 185.9L260.6 186.4L261.3 186.9L262.1 187.5L262.9 188.0L263.6 188.7L264.4 189.3L265.2 190.0L266.0 190.7L266.7 191.4L267.5 192.2L268.3 193.1L269.1 193.9L269.9 194.9L270.7 195.9L271.5 196.9L272.3 198.0L273.1 199.2L273.9 200.4L274.7 201.8L275.6 203.2L276.4 204.7L277.3 206.3L278.1 208.0L279.0 209.8L279.9 211.7L280.8 213.7L281.8 215.9L282.7 218.3L283.7 220.8L284.6 223.4L285.6 226.3L286.7 229.3L287.7 232.5L288.8 235.8L289.9 239.4L291.0 243.1L292.1 247.0L293.3 251.0L294.5 255.2L295.7 259.5L296.9 263.8L298.2 268.2L299.4 272.6L300.7 277.0L301.9 281.3L303.2 285.6L304.4 289.7L305.6 293.7L306.8 297.5L308.0 301.2L309.2 304.6L310.3 307.9L311.5 311.1L312.6 314.0L313.7 316.8L314.7 319.4L315.8 321.8L316.8 324.1L317.8 326.2L318.8 328.2L319.8 330.1L320.8 331.9L321.7 333.6L322.6 335.1L323.6 336.6L324.5 338.0L325.4 339.2L326.3 340.5L327.1 341.6L328.0 342.7L328.9 343.7L329.7 344.7L330.6 345.6L331.4 346.5L332.3 347.3L333.1 348.1L333.9 348.8L334.7 349.5L335.6 350.1L336.4 350.8L337.2 351.4L338.0 351.9L338.8 352.5L339.6 353.0L340.4 353.5L341.2 354.0L342.0 354.4L342.8 354.8L343.6 355.2L344.4 355.6L345.1 356.0L345.9 356.3L346.7 356.7L347.5 357.0L348.3 357.3L349.1 357.6L349.9 357.9L350.7 358.1L351.5 358.4L352.2 358.6L353.0 358.9L353.8 359.1L354.6 359.3L355.4 359.5L356.2 359.7L357.0 359.9L357.8 360.0L358.6 360.2L359.4 360.4L360.2 360.5L361.0 360.6L361.8 360.8L362.6 360.9L363.4 361.0L364.2 361.1L365.0 361.2L365.8 361.3L366.6 361.4L367.5 361.5L368.3 361.6L369.1 361.6L369.9 361.7L370.8 361.7L371.6 361.8L372.4 361.8L373.3 361.9L374.1 361.9L375.0 361.9L375.8 362.0L376.7 362.0L377.5 362.0L378.4 362.0L379.3 362.0L380.2 362.0L381.0 362.0L381.9 362.0L382.8 361.9L383.7 361.9L384.6 361.9L385.5 361.8L386.4 361.8L387.4 361.7L388.3 361.7L389.2 361.6L390.2 361.5L391.1 361.5L392.1 361.4L393.1 361.3L394.0 361.2L395.0 361.1L396.0 361.0L397.0 360.8L398.0 360.7L399.0 360.6L400.1 360.4L401.1 360.3L402.1 360.1L403.2 360.0L404.3 359.8L405.4 359.6L406.5 359.4L407.6 359.2L408.7 359.0L409.8 358.8L411.0 358.5L412.2 358.3L413.4 358.0L414.6 357.8L415.8 357.5L417.0 357.2L418.3 356.9L419.6 356.5L420.8 356.2L422.2 355.8L423.5 355.5L424.9 355.1L426.3 354.7L427.7 354.2L429.1 353.8L430.6 353.3L432.1 352.8L433.6 352.3L435.1 351.7L436.7 351.2L438.3 350.5L440.0 349.9L441.7 349.2L443.4 348.5L445.2 347.8L447.0 347.0L448.8 346.1L450.7 345.3L452.7 344.3L454.7 343.3L456.7 342.3L458.8 341.2L461.0 340.0L463.2 338.8L465.4 337.4L467.8 336.0L470.1 334.5L472.6 332.9L475.1 331.2L477.6 329.4L480.2 327.5L482.9 325.5L485.6 323.3L488.3 320.9L491.1 318.4L493.9 315.8L496.7 312.9L499.5 309.9L502.3 306.7L505.0 303.4L507.7 299.8L510.2 296.1L512.7 292.2L515.0 288.2L517.1 284.0L519.0 279.7L520.7 275.4L522.2 271.0L523.4 266.6L524.3 262.2L525.0 257.9L525.4 253.6L525.7 249.5L525.7 249.5L526.3 252.0L526.9 254.5L527.3 257.0L527.7 259.5L528.0 261.9L528.2 264.4L528.4 266.9L528.4 269.4L528.4 271.9L528.2 274.4L528.0 276.9L527.8 279.4L527.4 281.9L526.9 284.3L526.4 286.8L525.8 289.3L525.1 291.8L524.3 294.3L523.4 296.8L522.4 299.3L521.4 301.8L520.2 304.3L519.0 306.7L517.6 309.2L516.2 311.7L514.7 314.2L513.0 316.7L511.3 319.2L509.4 321.7L507.5 324.2L505.4 326.7L503.2 329.1L500.9 331.6L498.5 334.1L496.0 336.6L493.3 339.1L490.5 341.6L487.5 344.1L484.4 346.6L481.1 349.1L477.7 351.5L474.1 354.0L470.3 356.5L466.2 359.0L462.0 361.5L457.5 364.0L452.8 366.5L447.8 369.0L442.4 371.5L436.7 373.9L430.6 376.4L424.1 378.9L417.0 381.4L416.4 381.6L192.4 381.6L192.4 381.6L185.2 379.1L178.6 376.6L172.5 374.1L166.8 371.6L161.4 369.2L156.4 366.7L151.6 364.2L147.1 361.7L142.9 359.2L138.8 356.7L135.0 354.2L131.4 351.7L127.9 349.2L124.6 346.8L121.5 344.3L118.5 341.8L115.7 339.3L113.0 336.8L110.5 334.3L108.0 331.8L105.7 329.3L103.5 326.8L101.5 324.4L99.5 321.9L97.7 319.4L95.9 316.9L94.3 314.4L92.7 311.9L91.3 309.4L89.9 306.9L88.7 304.4L87.5 302.0L86.5 299.5L85.5 297.0L84.6 294.5L83.8 292.0L83.1 289.5L82.4 287.0L81.9 284.5L81.4 282.0L81.1 279.6L80.8 277.1L80.6 274.6L80.4 272.1L80.4 269.6L80.4 267.1L80.6 264.6L80.8 262.1L81.1 259.6L81.4 257.2L81.9 254.7L82.4 252.2L83.1 249.7Z" fill="rgba(10,0,60,0.25)"/>
<g transform="translate(409.2 249.8)" fill="#fff" stroke="none"><circle r="6.2"/><rect x="-1" y="-12" width="2" height="4.2" rx="0.8" transform="rotate(0)"/><rect x="-1" y="-12" width="2" height="4.2" rx="0.8" transform="rotate(45)"/><rect x="-1" y="-12" width="2" height="4.2" rx="0.8" transform="rotate(90)"/><rect x="-1" y="-12" width="2" height="4.2" rx="0.8" transform="rotate(135)"/><rect x="-1" y="-12" width="2" height="4.2" rx="0.8" transform="rotate(180)"/><rect x="-1" y="-12" width="2" height="4.2" rx="0.8" transform="rotate(225)"/><rect x="-1" y="-12" width="2" height="4.2" rx="0.8" transform="rotate(270)"/><rect x="-1" y="-12" width="2" height="4.2" rx="0.8" transform="rotate(315)"/></g>
<g transform="translate(188.5 289.0)" fill="#7fd4ee"><path d="M9.70 3.47A10.3 10.3 0 1 1 -3.47 -9.70A10.0 10.0 0 0 0 9.70 3.47Z"/><path d="M1.40 -10.30L1.82 -9.22L2.90 -8.80L1.82 -8.38L1.40 -7.30L0.98 -8.38L-0.10 -8.80L0.98 -9.22Z"/><path d="M7.60 -5.30L8.36 -3.36L10.30 -2.60L8.36 -1.84L7.60 0.10L6.84 -1.84L4.90 -2.60L6.84 -3.36Z"/></g>
</g><circle cx="19" cy="38.7" r="7.5" fill="none" stroke="#d6d6d6" stroke-width="1.1"/><path d="M22.8 34.9L20.3 40L15.2 42.5L17.7 37.4Z" fill="#ea5570"/><path d="M19 31.8V33M19 44.4V45.6M12.1 38.7H13.3M24.7 38.7H25.9" stroke="#d6d6d6" stroke-width="0.9"/><circle cx="63" cy="37.6" r="6.6" fill="none" stroke="#dcdcdc" stroke-width="1.1"/><rect x="60.8" y="35.4" width="4.4" height="4.4" fill="#707070"/><path d="M63.00 32.40L64.60 34.40L61.40 34.40Z" fill="#ececec"/><path d="M63.00 42.80L61.40 40.80L64.60 40.80Z" fill="#ececec"/><path d="M57.80 37.60L59.80 36.00L59.80 39.20Z" fill="#ececec"/><path d="M68.20 37.60L66.20 39.20L66.20 36.00Z" fill="#ececec"/><rect x="65" y="37.2" width="8" height="10.2" fill="#4c4c4c"/><rect x="65.8" y="41.4" width="6.5" height="5.4" rx="0.5" fill="#f2a71e"/><path d="M67.4 41.6V40A1.65 1.65 0 0 1 70.7 40V41.6" fill="none" stroke="#f2a71e" stroke-width="1"/><path d="M100 35L104.2 31.9V41.7L100 45.1Z" fill="#8e8e8e"/><path d="M104.2 31.9L108.5 35.4V45.1L104.2 41.7Z" fill="#7a7a7a"/><path d="M108.5 35.4L112.8 31.9V41.7L108.5 45.1Z" fill="#8e8e8e"/><circle cx="138.3" cy="37.3" r="4.9" fill="none" stroke="#909090" stroke-width="1.3"/><path d="M142.1 41L146.3 45" stroke="#909090" stroke-width="1.6" stroke-linecap="round"/><path d="M135.9 37.3H140.7" stroke="#8e8e8e" stroke-width="1.1"/><path d="M138.3 34.9V39.7" stroke="#8e8e8e" stroke-width="1.1"/><circle cx="166.8" cy="37.3" r="4.9" fill="none" stroke="#909090" stroke-width="1.3"/><path d="M170.6 41L174.8 45" stroke="#909090" stroke-width="1.6" stroke-linecap="round"/><path d="M164.4 37.3H169.2" stroke="#8e8e8e" stroke-width="1.1"/><rect x="188.9" y="31.7" width="13.6" height="13.2" rx="1.6" fill="none" stroke="#5b97de" stroke-width="1.2"/><rect x="193.7" y="36.2" width="4" height="4" fill="#6e6e6e"/><path d="M195.70 32.95L197.22 34.85L194.18 34.85Z" fill="#5b97de"/><path d="M195.70 43.45L194.18 41.55L197.22 41.55Z" fill="#5b97de"/><path d="M190.46 38.20L192.35 36.68L192.35 39.72Z" fill="#5b97de"/><path d="M200.94 38.20L199.04 39.72L199.04 36.68Z" fill="#5b97de"/><path d="M226.6 33.2A6.6 6.6 0 1 0 229.3 38.8" fill="none" stroke="#5b9ff0" stroke-width="1.15"/><path d="M230.4 31.7L230.1 36.9L225.2 32.6Z" fill="#5b9ff0"/><path d="M218.4 36.3H224.5V42.4H222.1V38.1H218.4Z" fill="#d4d4d4"/><circle cx="250.5" cy="38.4" r="7.1" fill="#4bba73"/><path d="M246.50 37.55H251.30V35.40L255.10 38.40L251.30 41.40V39.25H246.50Z" fill="#3e4642"/><circle cx="278.9" cy="38.4" r="7.1" fill="#4bba73"/><path d="M282.90 37.55H278.10V35.40L274.30 38.40L278.10 41.40V39.25H282.90Z" fill="#3e4642"/><circle cx="389.6" cy="38.3" r="6.9" fill="none" stroke="#e8607a" stroke-width="1.25"/><path d="M388 34.4H390V38H393.6V39.8H388Z" fill="#f0f0f0"/><path d="M656.8 4.4H661.6" stroke="#e8e8e8" stroke-width="0.9"/><rect x="679" y="2.3" width="4.3" height="4.2" rx="0.6" fill="none" stroke="#e0e0e0" stroke-width="0.75"/><path d="M701.5 2.3L705.7 6.5M705.7 2.3L701.5 6.5" stroke="#f0f0f0" stroke-width="0.9"/><path d="M367.7 46.8H370.7L369.2 48.5Z" fill="#e0e0e0"/><circle cx="26.9" cy="475.9" r="14.6" fill="none" stroke="#9c9c9c" stroke-width="1.1"/><path d="M26.90 466.30L29.22 469.20L24.58 469.20Z" fill="#a4a4a4"/><path d="M26.90 485.50L24.58 482.59L29.22 482.59Z" fill="#a4a4a4"/><path d="M17.30 475.90L20.20 473.58L20.20 478.22Z" fill="#a4a4a4"/><path d="M36.49 475.90L33.59 478.22L33.59 473.58Z" fill="#a4a4a4"/><path d="M555.1 471.5V478.5M554.7 474.8H611.9M611.5 471.5V475.2M599.9 474.8V478.5" fill="none" stroke="#a2a6a8" stroke-width="0.8"/></svg>
<div class="t" style="font-size:5.55px;line-height:10px;height:10px;color:#efefef;width:240px;text-align:center;transform:translate(-101.30px,50.00px) rotate(0.05deg) scaleX(0.955);">Show Navigation</div><div class="t" style="font-size:5.55px;line-height:10px;height:10px;color:#efefef;width:240px;text-align:center;transform:translate(-101.10px,56.55px) rotate(0.05deg) scaleX(0.955);">Panel</div><div class="t" style="font-size:5.55px;line-height:10px;height:10px;color:#efefef;width:240px;text-align:center;transform:translate(-56.00px,50.00px) rotate(0.05deg) scaleX(0.955);">Lock Navigation</div><div class="t" style="font-size:5.55px;line-height:10px;height:10px;color:#858585;width:240px;text-align:center;transform:translate(-13.50px,50.00px) rotate(0.05deg) scaleX(0.955);">Show Minimap</div><div class="t" style="font-size:5.55px;line-height:10px;height:10px;color:#858585;width:240px;text-align:center;transform:translate(20.00px,50.00px) rotate(0.05deg) scaleX(0.955);">Zoom In</div><div class="t" style="font-size:5.55px;line-height:10px;height:10px;color:#858585;width:240px;text-align:center;transform:translate(48.60px,50.00px) rotate(0.05deg) scaleX(0.955);">Zoom Out</div><div class="t" style="font-size:5.55px;line-height:10px;height:10px;color:#efefef;width:240px;text-align:center;transform:translate(75.30px,50.00px) rotate(0.05deg) scaleX(0.955);">Initial</div><div class="t" style="font-size:5.55px;line-height:10px;height:10px;color:#efefef;width:240px;text-align:center;transform:translate(75.25px,56.55px) rotate(0.05deg) scaleX(0.955);">View</div><div class="t" style="font-size:5.55px;line-height:10px;height:10px;color:#efefef;width:240px;text-align:center;transform:translate(102.20px,50.00px) rotate(0.05deg) scaleX(0.955);">Steadily</div><div class="t" style="font-size:5.55px;line-height:10px;height:10px;color:#efefef;width:240px;text-align:center;transform:translate(130.30px,50.00px) rotate(0.05deg) scaleX(0.955);">Backward</div><div class="t" style="font-size:5.55px;line-height:10px;height:10px;color:#efefef;width:240px;text-align:center;transform:translate(158.80px,50.00px) rotate(0.05deg) scaleX(0.955);">Forward</div><div class="t" style="font-size:5.55px;line-height:10px;height:10px;color:#efefef;width:240px;text-align:center;transform:translate(269.50px,50.00px) rotate(0.05deg) scaleX(0.955);">Current</div><div class="t" style="font-size:5.55px;line-height:10px;height:10px;color:#efefef;width:240px;text-align:center;transform:translate(269.40px,56.55px) rotate(0.05deg) scaleX(0.955);">Time</div><div class="t" style="font-size:5.4px;line-height:10px;height:10px;color:#8e9296;font-family:'DejaVu Sans','Liberation Sans',sans-serif;width:240px;text-align:center;transform:translate(-19.00px,67.70px) rotate(0.05deg) scaleX(1);">View</div><div class="t" style="font-size:5.6px;line-height:10px;height:10px;color:#8e9296;font-family:'DejaVu Sans','Liberation Sans',sans-serif;width:240px;text-align:center;transform:translate(131.00px,67.70px) rotate(0.05deg) scaleX(1);">Interactivity</div><div class="t" style="font-size:5.55px;line-height:10px;height:10px;color:#8e9296;font-family:'DejaVu Sans','Liberation Sans',sans-serif;width:240px;text-align:center;transform:translate(228.50px,67.70px) rotate(0.05deg) scaleX(1);">Set Date and Time</div><div class="t" style="font-size:5.55px;line-height:10px;height:10px;color:#efefef;width:240px;text-align:center;transform:translate(474.85px,14.80px) rotate(0.05deg) scaleX(0.955);">Demo</div><div class="t" style="font-size:5.55px;line-height:10px;height:10px;color:#efefef;width:240px;text-align:center;transform:translate(504.80px,14.80px) rotate(0.05deg) scaleX(0.955);">Skins</div><div class="t" style="font-size:5.55px;line-height:10px;height:10px;color:#efefef;transform-origin:0 50%;transform:translate(1.90px,14.80px) rotate(0.05deg) scaleX(0.955);">Options</div><div class="t" style="font-size:6.4px;line-height:10px;height:10px;color:#8e949c;width:240px;text-align:center;transform:translate(489.85px,-0.85px) rotate(0.05deg) scaleX(0.955);">Demo</div><div class="t" style="font-size:6.0px;line-height:10px;height:10px;color:#ffffff;font-weight:bold;width:240px;text-align:center;transform:translate(233.80px,-0.50px) rotate(0.05deg) scaleX(0.985);">Map Control Main Demo (C# code) - Map Projections</div><div class="t" style="font-size:5.65px;line-height:10px;height:10px;color:#f4f4f4;transform-origin:0 50%;transform:translate(301.90px,42.70px) rotate(0.05deg) scaleX(0.985);">5/3/2021 6:15:38 AM</div><div class="t" style="font-size:10.8px;line-height:14px;height:14px;color:#8b9296;transform-origin:0 50%;transform:translate(466.90px,468.50px) rotate(0.05deg) scaleX(0.94);">90.0°N</div><div class="t" style="font-size:10.8px;line-height:14px;height:14px;color:#8b9296;transform-origin:0 50%;transform:translate(508.75px,468.50px) rotate(0.05deg) scaleX(0.94);">180.0°E</div><div class="t" style="font-size:5.3px;line-height:10px;height:10px;color:#a0a5a8;font-family:'DejaVu Sans','Liberation Sans',sans-serif;width:240px;text-align:center;transform:translate(463.00px,464.90px) rotate(0.05deg) scaleX(1);">5000 km</div><div class="t" style="font-size:5.3px;line-height:10px;height:10px;color:#a0a5a8;font-family:'DejaVu Sans','Liberation Sans',sans-serif;width:240px;text-align:center;transform:translate(457.00px,475.60px) rotate(0.05deg) scaleX(1);">2500 mi</div><div class="t" style="font-size:6.05px;line-height:10px;height:10px;color:#fafafa;font-weight:bold;transform-origin:0 50%;transform:translate(639.10px,86.60px) rotate(0.05deg) scaleX(0.985);">Projection</div><div class="t" style="font-size:5.55px;line-height:10px;height:10px;color:#efefef;transform-origin:0 50%;transform:translate(636.80px,99.60px) rotate(0.05deg) scaleX(0.955);">Spherical Mercator</div><div class="t" style="font-size:5.55px;line-height:10px;height:10px;color:#efefef;transform-origin:0 50%;transform:translate(636.80px,110.10px) rotate(0.05deg) scaleX(0.955);">Equal Area</div><div class="t" style="font-size:5.55px;line-height:10px;height:10px;color:#efefef;transform-origin:0 50%;transform:translate(636.80px,120.60px) rotate(0.05deg) scaleX(0.955);">Equirectangular</div><div class="t" style="font-size:5.55px;line-height:10px;height:10px;color:#efefef;transform-origin:0 50%;transform:translate(636.80px,131.10px) rotate(0.05deg) scaleX(0.955);">Elliptical Mercator</div><div class="t" style="font-size:5.55px;line-height:10px;height:10px;color:#efefef;transform-origin:0 50%;transform:translate(636.80px,141.60px) rotate(0.05deg) scaleX(0.955);">Miller</div><div class="t" style="font-size:5.55px;line-height:10px;height:10px;color:#efefef;transform-origin:0 50%;transform:translate(636.80px,152.10px) rotate(0.05deg) scaleX(0.955);">Equidistant</div><div class="t" style="font-size:5.55px;line-height:10px;height:10px;color:#efefef;transform-origin:0 50%;transform:translate(636.80px,162.60px) rotate(0.05deg) scaleX(0.955);">Lambert Cylindrical Equal Area</div><div class="t" style="font-size:5.55px;line-height:10px;height:10px;color:#efefef;transform-origin:0 50%;transform:translate(636.80px,173.10px) rotate(0.05deg) scaleX(0.955);">Braun Stereographic</div><div class="t" style="font-size:5.55px;line-height:10px;height:10px;color:#ffffff;transform-origin:0 50%;transform:translate(636.80px,183.60px) rotate(0.05deg) scaleX(0.955);">Kavrayskiy VII</div><div class="t" style="font-size:5.55px;line-height:10px;height:10px;color:#efefef;transform-origin:0 50%;transform:translate(636.80px,194.10px) rotate(0.05deg) scaleX(0.955);">Sinusoidal</div><div class="t" style="font-size:5.55px;line-height:10px;height:10px;color:#efefef;transform-origin:0 50%;transform:translate(636.80px,204.60px) rotate(0.05deg) scaleX(0.955);">EPSG:4326</div>
</body></html>
